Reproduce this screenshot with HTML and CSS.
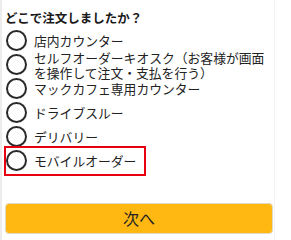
FILE: index.html
```html
<!DOCTYPE html>
<html lang="ja">
<head>
    <meta charset="UTF-8">
    <meta name="viewport" content="width=device-width, initial-scale=1.0">
    <title>アンケート</title>
    <link rel="stylesheet" href="styles.css">
</head>
<body>
    <div class="container">
        <h1 class="question">どこで注文しましたか？</h1>

        <div class="options">
            <label class="option"><span class="circle"></span><span class="text">店内カウンター</span></label>
            <label class="option"><span class="circle"></span><span class="text">セルフオーダーキオスク（お客様が画面を操作して注文・支払を行う）</span></label>
            <label class="option"><span class="circle"></span><span class="text">マックカフェ専用カウンター</span></label>
            <label class="option"><span class="circle"></span><span class="text">ドライブスルー</span></label>
            <label class="option"><span class="circle"></span><span class="text">デリバリー</span></label>
            <label class="option selected"><span class="circle"></span><span class="text">モバイルオーダー</span></label>
        </div>

        <button class="next">次へ</button>
    </div>
</body>
</html>
```

FILE: styles.css
```css
body {
    margin: 0;
    padding: 0;
    background-color: #ffffff;
    font-family: 'Noto Sans CJK JP', 'Noto Sans', sans-serif;
    color: #222222;
}

.container {
    width: 275px;
    height: 240px;
    border-left: 2px solid #ececec;
    border-right: 1px solid #f3f3f3;
    padding: 0 0 0 3px;
    box-sizing: border-box;
}

.question {
    margin: 0;
    padding-top: 9px;
    font-size: 12.5px;
    line-height: 18px;
    font-weight: bold;
    color: #1a1a1a;
}

.options {
    margin-top: 1.5px;
    display: flex;
    flex-direction: column;
}

.option {
    display: flex;
    align-items: center;
    height: 24px;
    width: 266px;
}

.circle {
    flex: none;
    width: 17px;
    height: 17px;
    border: 2.5px solid #2a2a2a;
    border-radius: 50%;
    margin-left: 1px;
    margin-right: 7px;
}

.text {
    font-size: 12.8px;
    line-height: 15px;
}

/* pilihan yang ditandai merah */
.selected {
    box-sizing: border-box;
    width: 142px;
    height: 30px;
    margin: -3px 0 -3px -1px;
    border: 2px solid #e60012;
}

.selected .circle {
    margin-left: 0;
}

.next {
    display: block;
    margin-top: 30px;
    width: 268px;
    height: 31px;
    background-color: #ffb812;
    border: 1px solid #e2d9c4;
    border-radius: 4px;
    font-family: 'Noto Sans CJK JP', sans-serif;
    font-size: 16px;
    color: #222222;
    cursor: pointer;
}
```
